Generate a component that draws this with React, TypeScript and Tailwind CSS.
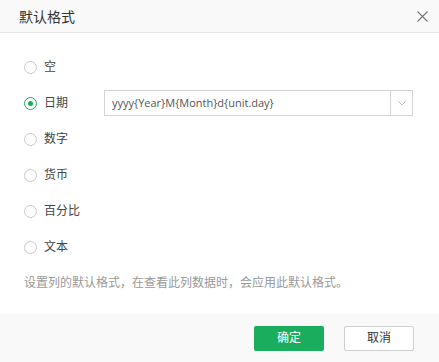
import { useState } from 'react';

const options = ['空', '日期', '数字', '货币', '百分比', '文本'];

function Radio({ checked }: { checked: boolean }) {
  return (
    <span
      className={
        'flex h-[13px] w-[13px] shrink-0 items-center justify-center rounded-full border bg-white ' +
        (checked ? 'border-[#1aad5e]' : 'border-[#c8c8c8]')
      }
    >
      {checked && <span className="h-[5px] w-[5px] rounded-full bg-[#1aad5e]" />}
    </span>
  );
}

export default function App() {
  const [selected, setSelected] = useState('日期');

  return (
    <div
      className="flex h-[362px] w-[439px] flex-col bg-white text-[12px] text-[#333]"
      style={{ fontFamily: '"Open Sans", "Noto Sans CJK SC", sans-serif' }}
    >
      <div className="flex h-[33px] shrink-0 items-center justify-between border-b border-[#e6e6e6] bg-[#f9f9f9] pl-[19px] pr-[9px]">
        <span className="text-[14px] text-[#333]">默认格式</span>
        <button className="flex h-[16px] w-[16px] items-center justify-center text-[#777]">
          <svg width="11" height="11" viewBox="0 0 11 11" fill="none" stroke="currentColor" strokeWidth="1.1">
            <path d="M0.5 0.5 L10.5 10.5 M10.5 0.5 L0.5 10.5" />
          </svg>
        </button>
      </div>

      <div className="flex flex-1 flex-col px-[24px] pt-[16px]">
        {options.map((opt) => (
          <div key={opt} className="flex h-[36px] items-center">
            <label
              className="flex w-[80px] cursor-pointer items-center gap-[7px]"
              onClick={() => setSelected(opt)}
            >
              <Radio checked={selected === opt} />
              <span className="text-[#444]">{opt}</span>
            </label>
            {opt === '日期' && selected === '日期' && (
              <div className="flex h-[26px] w-[309px] items-stretch border border-[#d4d4d4] bg-white">
                <span className="flex flex-1 items-center pl-[7px] text-[11px] text-[#555]">
                  yyyy{'{Year}'}M{'{Month}'}d{'{unit.day}'}
                </span>
                <span className="flex w-[22px] items-center justify-center border-l border-[#d4d4d4] text-[#bbb]">
                  <svg width="8" height="5" viewBox="0 0 8 5" fill="none" stroke="currentColor" strokeWidth="1">
                    <path d="M0.5 0.5 L4 4 L7.5 0.5" />
                  </svg>
                </span>
              </div>
            )}
          </div>
        ))}
        <p className="mt-[9px] leading-[18px] text-[#999]">
          设置列的默认格式，在查看此列数据时，会应用此默认格式。
        </p>
      </div>

      <div className="flex h-[48px] shrink-0 items-center justify-end gap-[20px] bg-[#f9f9f9] pr-[25px]">
        <button className="h-[25px] w-[70px] rounded-[2px] bg-[#1aad5e] text-white">确定</button>
        <button className="h-[25px] w-[70px] rounded-[2px] border border-[#cfcfcf] bg-white text-[#333]">
          取消
        </button>
      </div>
    </div>
  );
}
